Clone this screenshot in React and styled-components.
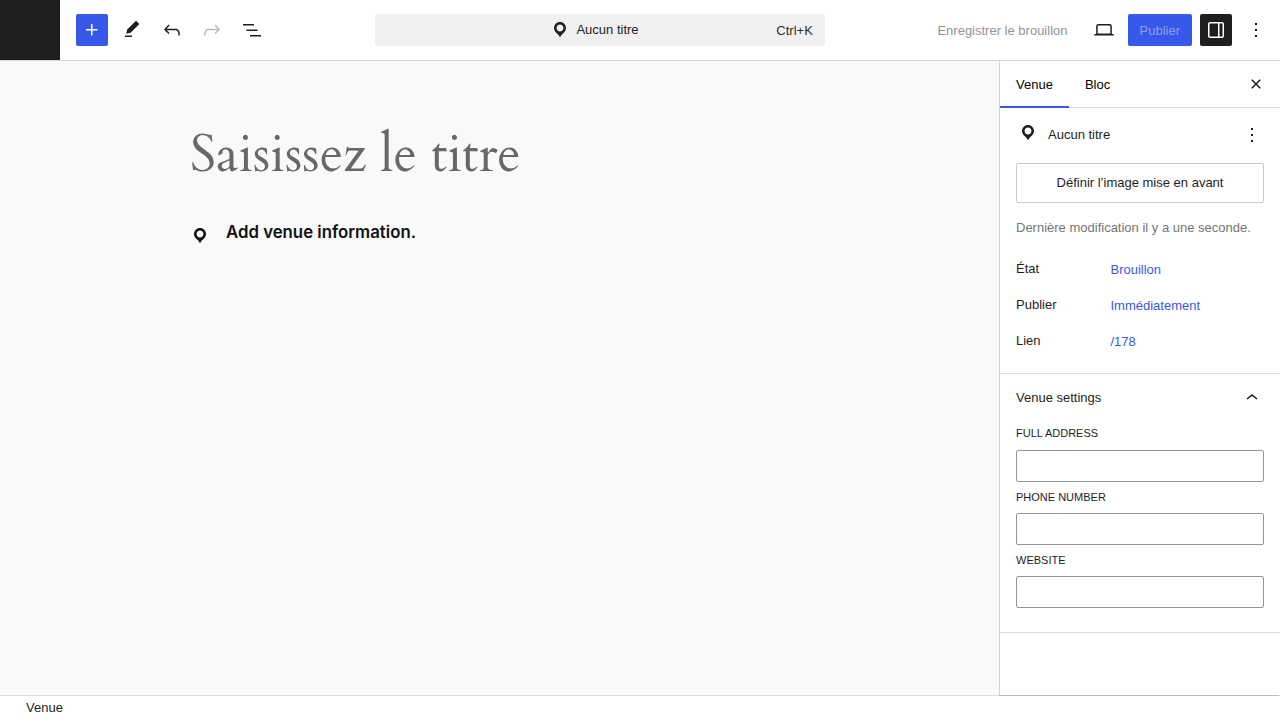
import React from 'react';
import styled, { createGlobalStyle, css } from 'styled-components';

const GlobalStyle = createGlobalStyle`
  *, *::before, *::after { box-sizing: border-box; }
  body {
    margin: 0;
    overflow: hidden;
    background: #fff;
    color: #1e1e1e;
    font: 13px/18px "Liberation Sans", Arial, sans-serif;
  }
  button, input { font: inherit; color: inherit; }
  button { padding: 0; border: 0; background: none; cursor: pointer; }
  h1, h2, p { margin: 0; font-weight: 400; }
`;

const paths = {
  plus: 'M11 12.5V17.5H12.5V12.5H17.5V11H12.5V6H11V11H6V12.5H11Z',
  edit: 'M16.6 3.2c-.3-.3-.8-.3-1.1 0L7.2 11.4l-1 4.4 4.4-1.1L18.9 6.5c.3-.3.3-.8 0-1.1l-2.3-2.2ZM12 17.4H5v1.5h7v-1.5Z',
  undo: 'M18.3 11.7c-.6-.6-1.4-.9-2.3-.9H6.7l2.9-3.3-1.1-1-4.5 5L8.5 16l1-1-2.7-2.7H16c.5 0 .9.2 1.3.5 1 1 1 3.4 1 4.5v.3h1.5v-.2c0-1.5 0-4.3-1.5-5.7z',
  redo: 'M15.6 6.5l-1.1 1 2.9 3.3H8c-.9 0-1.7.3-2.3.9-1.4 1.5-1.4 4.2-1.4 5.6v.2h1.5v-.3c0-1.1 0-3.5 1-4.5.3-.3.7-.5 1.3-.5h9.2L14.5 15l1.1 1.1 4.6-4.6-4.6-5z',
  list: 'M3 6h11v1.5H3V6Zm3.5 5.5h11V13h-11v-1.5ZM21 17H10v1.5h11V17Z',
  laptop: 'M20.5 16h-.7V8c0-1.1-.9-2-2-2H6.2c-1.1 0-2 .9-2 2v8h-.7c-.8 0-1.5.7-1.5 1.5h20c0-.8-.7-1.5-1.5-1.5zM5.7 8c0-.3.2-.5.5-.5h11.6c.3 0 .5.2.5.5v7.6H5.7V8z',
  drawer: 'M18 4H6c-1.1 0-2 .9-2 2v12c0 1.1.9 2 2 2h12c1.1 0 2-.9 2-2V6c0-1.1-.9-2-2-2zm-4 14.5H6c-.3 0-.5-.2-.5-.5V6c0-.3.2-.5.5-.5h8v13zm4.5-.5c0 .3-.2.5-.5.5h-2.5v-13H18c.3 0 .5.2.5.5v12z',
  more: 'M13 19h-2v-2h2v2zm0-6h-2v-2h2v2zm0-6h-2V5h2v2z',
  close: 'M12 13.06l3.712 3.713 1.061-1.06L13.061 12l3.712-3.712-1.06-1.06L12 10.938 8.288 7.227l-1.061 1.06L10.939 12l-3.712 3.712 1.06 1.061L12 13.061z',
  chevron: 'M6.5 12.4L12 8l5.5 4.4-.9 1.2L12 10l-4.5 3.6-1-1.2z',
  pin: 'M10 2C6.69 2 4 4.69 4 8c0 2.02 1.17 3.71 2.53 4.89.43.37 1.18.96 1.85 1.83.74.97 1.41 2.01 1.62 2.71.21-.7.88-1.74 1.62-2.71.67-.87 1.42-1.46 1.85-1.83C14.83 11.71 16 10.02 16 8c0-3.31-2.69-6-6-6zm0 2.56c1.9 0 3.44 1.54 3.44 3.44S11.9 11.44 10 11.44 6.56 9.9 6.56 8 8.1 4.56 10 4.56z',
};

const Svg = styled.svg`
  display: block;
  flex: none;
  fill: currentColor;
`;

const Icon = ({ name, size = 24 }) => (
  <Svg width={size} height={size} viewBox={`0 0 ${size} ${size}`} aria-hidden="true">
    <path d={paths[name]} />
  </Svg>
);

const Editor = styled.div`
  display: grid;
  grid-template-rows: 61px 634px 25px;
  height: 720px;
  width: 1280px;
`;

const Header = styled.header`
  display: grid;
  grid-template-columns: 60px 315px 450px 1fr;
  align-items: center;
  border-bottom: 1px solid #d5d5d5;
`;

const SiteHub = styled.div`
  align-self: stretch;
  background: #1e1e1e;
`;

const Tools = styled.div`
  display: flex;
  gap: 8px;
  padding-left: 16px;
`;

const variants = {
  primary: css`background: #3858e9; color: #fff;`,
  pressed: css`background: #1e1e1e; color: #fff;`,
  disabled: css`color: #bbb;`,
};

const IconButton = styled.button`
  display: flex;
  align-items: center;
  justify-content: center;
  width: 32px;
  height: 32px;
  border-radius: 2px;
  ${(p) => variants[p.$variant]}
`;

const CommandBar = styled.button`
  display: grid;
  grid-template-columns: 1fr auto 1fr;
  align-items: center;
  height: 32px;
  border-radius: 4px;
  background: #f0f0f0;
`;

const DocumentName = styled.span`
  grid-column: 2;
  display: flex;
  align-items: center;
  gap: 6.5px;
  padding-right: 11.5px;
  line-height: 20px;
`;

const Shortcut = styled.span`
  justify-self: end;
  padding: 2px 12.2px 0 0;
  color: #2f2f2f;
`;

const Actions = styled.div`
  display: flex;
  align-items: center;
  justify-content: flex-end;
  gap: 8px;
  padding-right: 8px;
`;

const SaveDraft = styled.button`
  height: 32px;
  padding: 1px 12.5px 0;
  color: #949494;
`;

const Publish = styled.button`
  width: 64px;
  height: 32px;
  padding: 1px 0.4px 0 0;
  border-radius: 2px;
  background: #3858e9;
  color: #8b9ef2;
`;

const Body = styled.div`
  display: grid;
  grid-template-columns: 999px 281px;
`;

const Canvas = styled.main`
  background: #f9f9f9;
  padding: 62px 190px 0;
`;

const Title = styled.h1`
  height: 64px;
  font: 400 51.9px/64px Cardo, "Liberation Serif", serif;
  white-space: nowrap;
  color: #686868;
`;

const VenueBlock = styled.div`
  display: flex;
  gap: 16px;
  margin-top: 33px;
  color: #111;
`;

const BlockPin = styled.span`
  padding-top: 6px;
`;

const Prompt = styled.p`
  font: 600 16.8px/24px Inter, sans-serif;
  white-space: nowrap;
`;

const Sidebar = styled.aside`
  position: relative;
  border-left: 1px solid #d5d5d5;

  &::after {
    content: "";
    position: absolute;
    left: -1px;
    right: 1px;
    bottom: -1px;
    height: 1px;
    background: #bbb;
  }
`;

const Tabs = styled.div`
  display: flex;
  height: 47px;
  padding-right: 8px;
  align-items: center;
  border-bottom: 1px solid #ddd;
`;

const Tab = styled.button`
  height: 47px;
  padding: 3px 16px 0;
  border-bottom: 2px solid ${(p) => (p.$active ? '#3858e9' : 'transparent')};
  color: #000;
`;

const TabSpacer = styled.span`
  flex: 1;
`;

const Summary = styled.section`
  height: 266px;
  padding: 11px 16px 0;
  border-bottom: 1px solid #ddd;
`;

const CardHeader = styled.div`
  display: flex;
  align-items: center;
  height: 32px;
  margin-right: -4px;
`;

const CardPin = styled.span`
  padding: 0 10px 4px 2px;
`;

const CardTitle = styled.h2`
  flex: 1;
  font-size: 13px;
  line-height: 18px;
`;

const ImageButton = styled.button`
  display: block;
  width: 248px;
  height: 40px;
  margin-top: 12px;
  border: 1px solid #ccc;
  border-radius: 2px;
  padding-bottom: 1px;
`;

const Modified = styled.p`
  margin-top: 16px;
  color: #757575;
  white-space: nowrap;
`;

const Rows = styled.div`
  display: grid;
  gap: 4px;
  margin-top: 16px;
`;

const Row = styled.div`
  display: grid;
  grid-template-columns: 94.5px 1fr;
  height: 32px;
  align-items: center;
`;

const RowLabel = styled.span`
  padding-bottom: 1px;
`;

const RowValue = styled.button`
  justify-self: start;
  padding-top: 1px;
  color: #3858e9;
`;

const Settings = styled.section`
  height: 259px;
  padding: 0 16px;
  border-bottom: 1px solid #ddd;
`;

const PanelToggle = styled.button`
  display: flex;
  align-items: center;
  justify-content: space-between;
  width: 248px;
  height: 48px;
`;

const Fields = styled.div`
  display: grid;
  gap: 8px;
`;

const Field = styled.label`
  display: block;
`;

const FieldLabel = styled.span`
  display: block;
  height: ${(p) => (p.$first ? 28 : 23)}px;
  padding-top: ${(p) => (p.$first ? 4 : 0)}px;
  font-size: 11px;
  line-height: 15px;
  text-transform: uppercase;
`;

const Input = styled.input`
  display: block;
  width: 248px;
  height: 32px;
  padding: 0 8px;
  border: 1px solid #949494;
  border-radius: 2px;
  background: #fff;
`;

const Footer = styled.footer`
  display: flex;
  align-items: center;
  padding: 0 26px;
  border-top: 1px solid #ddd;
`;

const details = [
  ['État', 'Brouillon'],
  ['Publier', 'Immédiatement'],
  ['Lien', '/178'],
];

const fields = ['Full address', 'Phone number', 'Website'];

export default function App() {
  return (
    <>
      <GlobalStyle />
      <Editor>
        <Header>
          <SiteHub />
          <Tools>
            <IconButton $variant="primary"><Icon name="plus" /></IconButton>
            <IconButton><Icon name="edit" /></IconButton>
            <IconButton><Icon name="undo" /></IconButton>
            <IconButton $variant="disabled"><Icon name="redo" /></IconButton>
            <IconButton><Icon name="list" /></IconButton>
          </Tools>
          <CommandBar>
            <DocumentName><Icon name="pin" size={20} />Aucun titre</DocumentName>
            <Shortcut>Ctrl+K</Shortcut>
          </CommandBar>
          <Actions>
            <SaveDraft>Enregistrer le brouillon</SaveDraft>
            <IconButton><Icon name="laptop" /></IconButton>
            <Publish>Publier</Publish>
            <IconButton $variant="pressed"><Icon name="drawer" /></IconButton>
            <IconButton><Icon name="more" /></IconButton>
          </Actions>
        </Header>
        <Body>
          <Canvas>
            <Title>Saisissez le titre</Title>
            <VenueBlock>
              <BlockPin><Icon name="pin" size={20} /></BlockPin>
              <Prompt>Add venue information.</Prompt>
            </VenueBlock>
          </Canvas>
          <Sidebar>
            <Tabs>
              <Tab $active>Venue</Tab>
              <Tab>Bloc</Tab>
              <TabSpacer />
              <IconButton><Icon name="close" /></IconButton>
            </Tabs>
            <Summary>
              <CardHeader>
                <CardPin><Icon name="pin" size={20} /></CardPin>
                <CardTitle>Aucun titre</CardTitle>
                <IconButton><Icon name="more" /></IconButton>
              </CardHeader>
              <ImageButton>Définir l’image mise en avant</ImageButton>
              <Modified>Dernière modification il y a une seconde.</Modified>
              <Rows>
                {details.map(([label, value]) => (
                  <Row key={label}>
                    <RowLabel>{label}</RowLabel>
                    <RowValue>{value}</RowValue>
                  </Row>
                ))}
              </Rows>
            </Summary>
            <Settings>
              <PanelToggle>
                Venue settings
                <Icon name="chevron" />
              </PanelToggle>
              <Fields>
                {fields.map((label, i) => (
                  <Field key={label}>
                    <FieldLabel $first={i === 0}>{label}</FieldLabel>
                    <Input type="text" />
                  </Field>
                ))}
              </Fields>
            </Settings>
          </Sidebar>
        </Body>
        <Footer>Venue</Footer>
      </Editor>
    </>
  );
}
